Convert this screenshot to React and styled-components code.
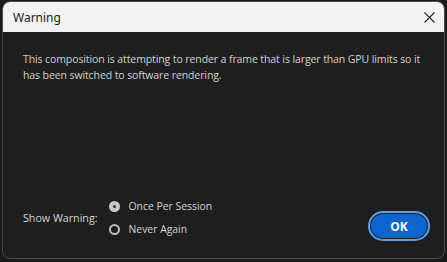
import React from "react";
import styled, { createGlobalStyle } from "styled-components";

const Global = createGlobalStyle`
  html, body { margin: 0; padding: 0; background: #1b1b1b; }
  body { width: 447px; height: 262px; overflow: hidden; }
`;

const Frame = styled.div`
  box-sizing: border-box;
  width: 447px;
  height: 262px;
  padding: 1px 2px 3px 2px;
  background: #1b1b1b;
`;

const Window = styled.div`
  box-sizing: border-box;
  width: 443px;
  height: 258px;
  border: 1px solid #4a4a4a;
  border-radius: 8px;
  overflow: hidden;
  display: flex;
  flex-direction: column;
  background: #1e1e1e;
`;

const TitleBar = styled.div`
  height: 30px;
  flex: none;
  background: #f3f3f3;
  display: flex;
  align-items: center;
  justify-content: space-between;
  padding: 0 9px 0 10px;
  font-family: "Noto Sans", sans-serif;
  font-size: 12px;
  color: #1a1a1a;
`;

const Close = styled.svg`
  width: 11px;
  height: 11px;
`;

const Body = styled.div`
  flex: 1;
  display: flex;
  flex-direction: column;
  padding: 19px 17px 21px 20px;
  font-family: "Open Sans", sans-serif;
  color: #d2d2d2;
`;

const Message = styled.p`
  margin: 0;
  font-size: 10.5px;
  line-height: 16px;
  letter-spacing: -0.1px;
`;

const Footer = styled.div`
  margin-top: auto;
  display: flex;
  align-items: center;
`;

const Label = styled.span`
  font-size: 10.7px;
  margin-right: 11px;
`;

const Options = styled.div`
  display: flex;
  flex-direction: column;
  gap: 7px;
`;

const Option = styled.label`
  display: flex;
  align-items: center;
  gap: 9px;
  font-size: 10.4px;
  height: 16px;
`;

const Radio = styled.span`
  box-sizing: border-box;
  width: 11px;
  height: 11px;
  border-radius: 50%;
  border: 2px solid ${(p) => (p.$checked ? "#c8c8c8" : "#bdbdbd")};
  background: ${(p) => (p.$checked ? "#c8c8c8" : "#1e1e1e")};
  display: flex;
  align-items: center;
  justify-content: center;
  &::after {
    content: "";
    width: 3px;
    height: 3px;
    border-radius: 50%;
    background: ${(p) => (p.$checked ? "#3a3a3a" : "transparent")};
  }
`;

const OkButton = styled.button`
  margin-left: auto;
  align-self: flex-end;
  margin-bottom: -1px;
  box-sizing: border-box;
  width: 56px;
  height: 24px;
  border-radius: 12px;
  border: none;
  background: #0b64d0;
  color: #fff;
  font-family: "Open Sans", sans-serif;
  font-weight: 700;
  font-size: 12px;
  box-shadow: 0 0 0 1px #1e1e1e, 0 0 0 3px #5d9ee8;
  padding: 0;
`;

export default function App() {
  return (
    <>
      <Global />
      <Frame>
        <Window>
          <TitleBar>
            <span>Warning</span>
            <Close viewBox="0 0 11 11">
              <path d="M0.5 0.5 L10.5 10.5 M10.5 0.5 L0.5 10.5" stroke="#222" strokeWidth="1.1" fill="none" />
            </Close>
          </TitleBar>
          <Body>
            <Message>
              This composition is attempting to render a frame that is larger than GPU limits so it has been switched to software rendering.
            </Message>
            <Footer>
              <Label>Show Warning:</Label>
              <Options>
                <Option>
                  <Radio $checked />
                  Once Per Session
                </Option>
                <Option>
                  <Radio />
                  Never Again
                </Option>
              </Options>
              <OkButton>OK</OkButton>
            </Footer>
          </Body>
        </Window>
      </Frame>
    </>
  );
}
